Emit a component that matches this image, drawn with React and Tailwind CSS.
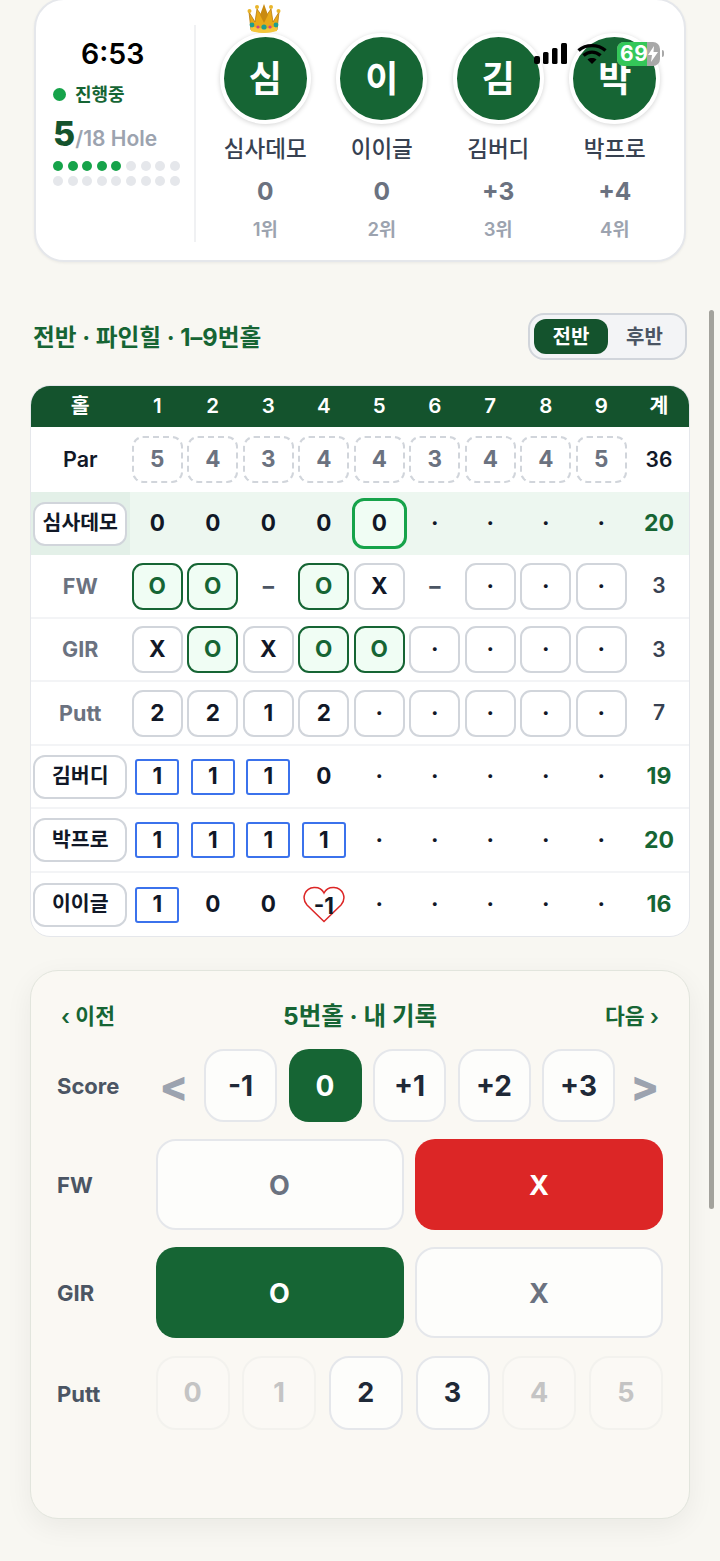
import { Fragment } from "react";

const ROW = "grid grid-cols-[98.5px_repeat(9,55.5px)_1fr] h-[63.5px] items-center";
const DIVIDER = "border-b-2 border-[#f3f4f6]";

const players = [
  { ch: "심", name: "심사데모", score: "0", rank: "1위" },
  { ch: "이", name: "이이글", score: "0", rank: "2위" },
  { ch: "김", name: "김버디", score: "+3", rank: "3위" },
  { ch: "박", name: "박프로", score: "+4", rank: "4위" },
];

function Crown() {
  return (
    <svg viewBox="0 0 34 30" className="absolute left-[23px] top-[-33px] w-[34px] h-[30px]">
      <path d="M2 8 L8 18 L10 5 L17 15 L24 5 L26 18 L32 8 L30 26 Q17 30 4 26 Z" fill="#e8a917" stroke="#b77a0c" strokeWidth="0.8" />
      <path d="M4 22 Q17 27 30 22 L30 27 Q17 31 4 27 Z" fill="#f5c63a" />
      <circle cx="2.5" cy="7" r="2" fill="#e9b52a" />
      <circle cx="10" cy="3" r="2" fill="#e9b52a" />
      <circle cx="24" cy="3" r="2" fill="#e9b52a" />
      <circle cx="31.5" cy="7" r="2" fill="#e9b52a" />
      <path d="M17 0 L21 11 L17 19 L13 11 Z" fill="#c98a10" />
      <circle cx="5" cy="21" r="2.4" fill="#1f9e8f" />
      <circle cx="29" cy="21" r="2.4" fill="#1f9e8f" />
      <circle cx="11" cy="23" r="1.6" fill="#d0408a" />
      <circle cx="23" cy="23" r="1.6" fill="#d0408a" />
      <circle cx="17" cy="23" r="2.6" fill="#1f9e8f" />
    </svg>
  );
}

function StatusBar() {
  return (
    <div className="absolute left-0 top-0 w-[720px] h-[70px] pointer-events-none">
      <span className="absolute left-[81px] top-[37px] text-[28.5px] leading-[34px] font-semibold text-black">6:53</span>
      <svg viewBox="0 0 34 22" className="absolute left-[534px] top-[43px] w-[34px] h-[22px]">
        <rect x="0" y="13" width="6" height="8" rx="2" fill="#000" />
        <rect x="9" y="9" width="5.5" height="12" rx="1.5" fill="#000" />
        <rect x="18" y="5" width="5.5" height="16" rx="1.5" fill="#000" />
        <rect x="27" y="0" width="6" height="21" rx="1.5" fill="#000" />
      </svg>
      <svg viewBox="0 0 30 22" className="absolute left-[577px] top-[43px] w-[30px] h-[22px]" fill="none" stroke="#000" strokeWidth="3.4">
        <path d="M1.5 7.5 C9 1 21 1 28.5 7.5" />
        <path d="M6.5 12.5 C11.5 8 18.5 8 23.5 12.5" />
        <path d="M15 21 L10.5 16.5 C13 14.6 17 14.6 19.5 16.5 Z" fill="#000" stroke="none" />
      </svg>
      <div className="absolute left-[617px] top-[42px] w-[43px] h-[24px] rounded-[7px] overflow-hidden bg-[#a8a8a8] flex">
        <div className="w-[30px] bg-[#34c759] text-white text-[21px] leading-[24px] font-bold pl-[3px] tracking-[0.5px]">69</div>
      </div>
      <svg viewBox="0 0 10 16" className="absolute left-[648px] top-[46px] w-[10px] h-[16px]">
        <path d="M6 0 L0 9 H4 L3 16 L10 6 H5.5 Z" fill="#fff" />
      </svg>
      <div className="absolute left-[662px] top-[50px] w-[2px] h-[7px] rounded-r-full bg-[#a8a8a8]" />
    </div>
  );
}

function TopCard() {
  return (
    <div className="mx-[34px] mt-[-2px] h-[264px] bg-white rounded-[30px] border-2 border-[#e5e7eb] shadow-[0_1px_3px_rgba(0,0,0,0.06)] flex pt-[25px]">
      <div className="w-[160px] h-[217px] border-r-2 border-[#f0f1f3] pl-[17px]">
        <div className="h-[57px]" />
        <div className="flex items-center gap-[9px] h-[24px]">
          <span className="w-[13px] h-[13px] rounded-full bg-[#16a34a]" />
          <span className="text-[18px] font-semibold text-[#166534]">진행중</span>
        </div>
        <div className="flex items-baseline mt-[8px] h-[40px]">
          <span className="text-[34px] leading-[40px] font-extrabold text-[#14532d]">5</span>
          <span className="text-[21px] font-semibold text-[#9ca3af]">/18 Hole</span>
        </div>
        <div className="grid grid-cols-[repeat(9,10px)] gap-x-[4.6px] gap-y-[5px] mt-[7px]">
          {Array.from({ length: 18 }).map((_, i) => (
            <span key={i} className={i < 5 ? "w-[10px] h-[10px] rounded-full bg-[#16a34a]" : "w-[10px] h-[10px] rounded-full bg-[#e5e7eb]"} />
          ))}
        </div>
      </div>
      <div className="flex-1 grid grid-cols-4 px-[11px] h-[217px]">
        {players.map((p, i) => (
          <div key={p.name} className="flex flex-col items-center">
            <div className="relative mt-[8px] w-[91px] h-[91px] rounded-full bg-[#166534] border-[4px] border-white shadow-[0_1px_5px_rgba(0,0,0,0.18)] flex items-center justify-center text-white text-[36px] font-semibold">
              {i === 0 && <Crown />}
              {p.ch}
            </div>
            <div className="mt-[9px] h-[32px] leading-[32px] text-[22.5px] font-medium text-[#374151]">{p.name}</div>
            <div className="mt-[10px] h-[32px] leading-[32px] text-[24.5px] font-bold text-[#6b7280]">{p.score}</div>
            <div className="mt-[9px] h-[26px] leading-[26px] text-[18.5px] font-semibold text-[#9ca3af]">{p.rank}</div>
          </div>
        ))}
      </div>
    </div>
  );
}

function Cell({ kind, children }) {
  const base = "mx-auto flex items-center justify-center text-[22.5px] font-bold leading-none";
  if (kind === "par")
    return <div className={`${base} w-[51px] h-[47px] rounded-[11px] border-2 border-dashed border-[#d1d5db] text-[#6b7280]`}>{children}</div>;
  if (kind === "green")
    return <div className={`${base} w-[51px] h-[47px] rounded-[11px] border-2 border-[#166534] bg-[#f0fdf4] text-[#166534]`}>{children}</div>;
  if (kind === "box")
    return <div className={`${base} w-[51px] h-[47px] rounded-[11px] border-2 border-[#d1d5db] bg-white text-[#111827]`}>{children}</div>;
  if (kind === "active")
    return <div className={`${base} w-[55px] h-[51px] rounded-[12px] border-[3px] border-[#16a34a] bg-[#f0fdf4] text-[#111827]`}>{children}</div>;
  if (kind === "birdie")
    return <div className={`${base} w-[44px] h-[36px] rounded-[3px] border-2 border-[#3b72ec] bg-white text-[#111827]`}>{children}</div>;
  if (kind === "heart")
    return (
      <div className={`${base} relative w-[44px] h-[37px] text-[#111827]`}>
        <svg viewBox="0 0 44 37" className="absolute inset-0 w-[44px] h-[37px]" fill="none" stroke="#dc2626" strokeWidth="1.5">
          <path d="M22 35.5 L5 19 C-1 12 3 2 12 1.5 C17 1.2 20.5 4 22 7 C23.5 4 27 1.2 32 1.5 C41 2 45 12 39 19 Z" />
        </svg>
        <span className="relative mt-[3px]">{children}</span>
      </div>
    );
  if (kind === "dash") return <div className={`${base} text-[#4b5563]`}>–</div>;
  return <div className={`${base} text-[#111827]`}>{children}</div>;
}

function Total({ value, tone }) {
  const cls = {
    green: "text-[23px] font-bold text-[#166534]",
    plain: "text-[21px] font-semibold text-[#111827]",
    gray: "text-[21px] font-semibold text-[#374151]",
  }[tone];
  return <div className={`text-center ${cls}`}>{value}</div>;
}

function NamePill({ children }) {
  return (
    <div className="w-[94px] h-[44px] mx-auto rounded-[12px] bg-white border-2 border-[#d1d5db] flex items-center justify-center text-[20.5px] font-semibold text-[#111827]">
      {children}
    </div>
  );
}

function InputRow({ label, cells, total }) {
  return (
    <div className={`${ROW} ${DIVIDER}`}>
      <div className="text-center text-[21.5px] font-bold text-[#6b7280]">{label}</div>
      {cells.map((c, i) => (
        <Fragment key={i}>
          {c === "-" ? (
            <Cell kind="dash" />
          ) : c === "O" ? (
            <Cell kind="green">O</Cell>
          ) : (
            <Cell kind="box">{c}</Cell>
          )}
        </Fragment>
      ))}
      <Total value={total} tone="gray" />
    </div>
  );
}

function PlayerRow({ name, cells, total, last }) {
  return (
    <div className={last ? ROW : `${ROW} ${DIVIDER}`}>
      <NamePill>{name}</NamePill>
      {cells.map((c, i) => (
        <Fragment key={i}>
          {c === "1" ? <Cell kind="birdie">1</Cell> : c === "-1" ? <Cell kind="heart">-1</Cell> : <Cell>{c}</Cell>}
        </Fragment>
      ))}
      <Total value={total} tone="green" />
    </div>
  );
}

function ScoreTable() {
  const pars = [5, 4, 3, 4, 4, 3, 4, 4, 5];
  return (
    <div className="mx-[30px] mt-[24.5px] rounded-[20px] border-[1.5px] border-[#e5e7eb] bg-white overflow-hidden">
      <div className="grid grid-cols-[98.5px_repeat(9,55.5px)_1fr] h-[41.75px] items-center bg-[#14532d] text-white text-[20.5px] font-semibold text-center">
        <div>홀</div>
        {[1, 2, 3, 4, 5, 6, 7, 8, 9].map((n) => (
          <div key={n}>{n}</div>
        ))}
        <div>계</div>
      </div>
      <div className="grid grid-cols-[98.5px_repeat(9,55.5px)_1fr] h-[64.5px] items-center">
        <div className="text-center text-[21.5px] font-semibold text-[#111827]">Par</div>
        {pars.map((p, i) => (
          <Cell key={i} kind="par">{p}</Cell>
        ))}
        <Total value="36" tone="plain" />
      </div>
      <div className={`${ROW} bg-[#edf7f0]`}>
        <div className="h-full flex items-center bg-[#e3f0e8]">
          <NamePill>심사데모</NamePill>
        </div>
        <Cell>0</Cell>
        <Cell>0</Cell>
        <Cell>0</Cell>
        <Cell>0</Cell>
        <Cell kind="active">0</Cell>
        <Cell>·</Cell>
        <Cell>·</Cell>
        <Cell>·</Cell>
        <Cell>·</Cell>
        <Total value="20" tone="green" />
      </div>
      <InputRow label="FW" cells={["O", "O", "-", "O", "X", "-", "·", "·", "·"]} total="3" />
      <InputRow label="GIR" cells={["X", "O", "X", "O", "O", "·", "·", "·", "·"]} total="3" />
      <InputRow label="Putt" cells={["2", "2", "1", "2", "·", "·", "·", "·", "·"]} total="7" />
      <PlayerRow name="김버디" cells={["1", "1", "1", "0", "·", "·", "·", "·", "·"]} total="19" />
      <PlayerRow name="박프로" cells={["1", "1", "1", "1", "·", "·", "·", "·", "·"]} total="20" />
      <PlayerRow name="이이글" cells={["1", "0", "0", "-1", "·", "·", "·", "·", "·"]} total="16" last />
    </div>
  );
}

function WideButton({ label, tone }) {
  const cls = {
    off: "bg-[#fdfdfb] border-2 border-[#e5e7eb] text-[#6b7280]",
    green: "bg-[#166534] text-white",
    red: "bg-[#dc2626] text-white",
  }[tone];
  return (
    <button className={`w-[248px] h-[91px] pt-[3px] rounded-[20px] text-[27px] font-bold ${cls}`}>{label}</button>
  );
}

function InputPanel() {
  const label = "w-[98.5px] pt-[2px] text-[22px] font-bold text-[#4b5563] shrink-0";
  const arrow = "w-[37px] text-center text-[42px] leading-none font-extrabold text-[#9ca3af]";
  return (
    <div className="mx-[30px] mt-[32.75px] h-[549px] rounded-[28px] border-[1.5px] border-[#e2e5dd] bg-[#faf8f3] shadow-[0_8px_28px_rgba(0,0,0,0.06)] px-[26px] pt-[32px]">
      <div className="flex items-center justify-between h-[26px] px-[4px] text-[#166534]">
        <span className="text-[21.5px] font-semibold">‹ 이전</span>
        <span className="text-[24.5px] font-bold">5번홀 · 내 기록</span>
        <span className="text-[21.5px] font-semibold">다음 ›</span>
      </div>
      <div className="flex items-center mt-[20px] h-[73px]">
        <div className={label}>Score</div>
        <div className="flex items-center gap-[11.5px]">
          <span className={arrow}>&lt;</span>
          {["-1", "0", "+1", "+2", "+3"].map((s) => (
            <button
              key={s}
              className={
                s === "0"
                  ? "w-[73px] h-[73px] rounded-[20px] bg-[#166534] text-white text-[28px] font-bold"
                  : "w-[73px] h-[73px] rounded-[20px] bg-[#fdfdfb] border-2 border-[#e5e7eb] text-[#1f2937] text-[28px] font-bold"
              }
            >
              {s}
            </button>
          ))}
          <span className={arrow}>&gt;</span>
        </div>
      </div>
      <div className="flex items-center mt-[17px]">
        <div className={label}>FW</div>
        <div className="flex-1 flex justify-between">
          <WideButton label="O" tone="off" />
          <WideButton label="X" tone="red" />
        </div>
      </div>
      <div className="flex items-center mt-[17px]">
        <div className={label}>GIR</div>
        <div className="flex-1 flex justify-between">
          <WideButton label="O" tone="green" />
          <WideButton label="X" tone="off" />
        </div>
      </div>
      <div className="flex items-center mt-[18px]">
        <div className={label}>Putt</div>
        <div className="flex-1 flex justify-between">
          {[0, 1, 2, 3, 4, 5].map((n) => (
            <button
              key={n}
              className={
                n === 2 || n === 3
                  ? "w-[74px] h-[74px] rounded-[20px] bg-[#fdfdfb] border-2 border-[#e5e7eb] text-[#1f2937] text-[27px] font-bold"
                  : "w-[74px] h-[74px] rounded-[20px] bg-[#fbf9f5] border-2 border-[#f3f2ee] text-[#c4c4c4] text-[27px] font-bold"
              }
            >
              {n}
            </button>
          ))}
        </div>
      </div>
    </div>
  );
}

export default function App() {
  return (
    <div className="relative w-[720px] h-[1561px] overflow-hidden bg-[#f8f7f2] font-[Inter,'Noto_Sans_CJK_KR',sans-serif]">
      <TopCard />
      <div className="flex items-center justify-between mt-[51px] pl-[33px] pr-[33px] h-[47px]">
        <h2 className="mt-[2px] text-[23.7px] font-bold text-[#166534]">전반 · 파인힐 · 1–9번홀</h2>
        <div className="w-[159px] h-[47px] rounded-[16px] border-2 border-[#d1d5db] bg-[#f3f4f6] flex items-center p-[4px] text-[20px] font-semibold">
          <span className="w-[74px] h-[35px] rounded-[12px] bg-[#14532d] text-white flex items-center justify-center">전반</span>
          <span className="flex-1 text-center text-[#4b5563]">후반</span>
        </div>
      </div>
      <ScoreTable />
      <InputPanel />
      <StatusBar />
      <div className="absolute left-[709px] top-[310px] w-[5px] h-[899px] rounded-full bg-[#a3a29c]" />
    </div>
  );
}
